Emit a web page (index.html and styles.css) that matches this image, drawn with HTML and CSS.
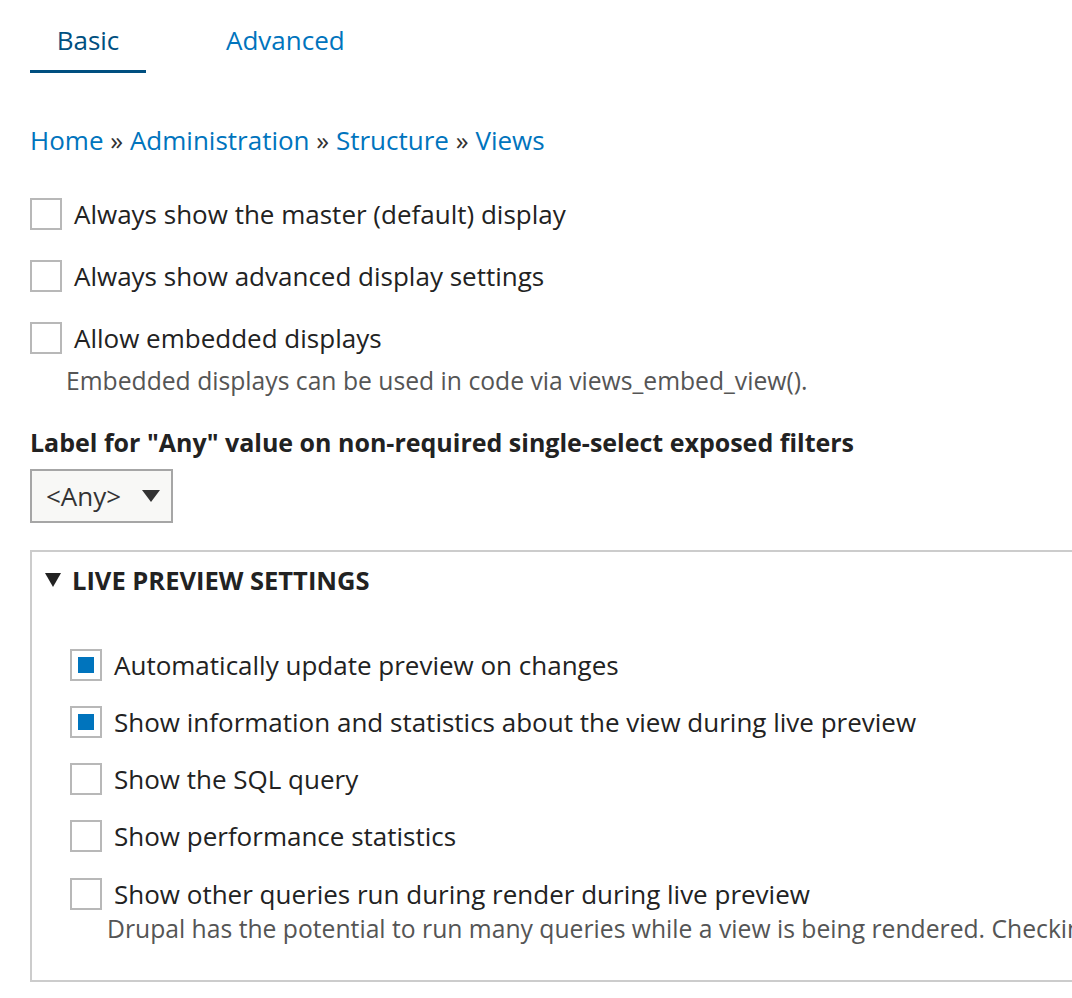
FILE: index.html
```html
<!DOCTYPE html>
<html>
<head>
<meta charset="utf-8">
<link rel="stylesheet" href="styles.css">
</head>
<body>
<div class="page">
  <nav class="tabs">
    <a class="tab active">Basic</a>
    <a class="tab">Advanced</a>
  </nav>
  <div class="breadcrumb">
    <a>Home</a> <span class="sep">»</span> <a>Administration</a> <span class="sep">»</span> <a>Structure</a> <span class="sep">»</span> <a>Views</a>
  </div>
  <div class="options">
    <div class="item"><span class="cb"></span><span class="lbl">Always show the master (default) display</span></div>
    <div class="item"><span class="cb"></span><span class="lbl">Always show advanced display settings</span></div>
    <div class="item"><span class="cb"></span><span class="lbl">Allow embedded displays</span></div>
    <div class="desc">Embedded displays can be used in code via views_embed_view().</div>
  </div>
  <div class="field">
    <div class="field-label">Label for "Any" value on non-required single-select exposed filters</div>
    <div class="select"><span>&lt;Any&gt;</span><span class="arrow"></span></div>
  </div>
  <fieldset class="fs">
    <div class="legend"><span class="tri"></span>LIVE PREVIEW SETTINGS</div>
    <div class="fs-items">
      <div class="item2"><span class="cb checked"></span><span class="lbl">Automatically update preview on changes</span></div>
      <div class="item2"><span class="cb checked"></span><span class="lbl">Show information and statistics about the view during live preview</span></div>
      <div class="item2"><span class="cb"></span><span class="lbl">Show the SQL query</span></div>
      <div class="item2"><span class="cb"></span><span class="lbl">Show performance statistics</span></div>
      <div class="item2"><span class="cb"></span><span class="lbl">Show other queries run during render during live preview</span></div>
      <div class="desc2">Drupal has the potential to run many queries while a view is being rendered. Checking this option will display every query run during the rendering of a view.</div>
    </div>
  </fieldset>
</div>
</body>
</html>
```
FILE: styles.css
```css
html, body { margin: 0; padding: 0; background: #fff; }
body {
  font-family: "Open Sans", "Noto Sans", sans-serif;
  color: #333;
  overflow: hidden;
  width: 1072px;
  height: 998px;
}
.page { padding: 0 0 0 30px; overflow: hidden; }
.tabs {
  display: flex;
  height: 73px;
  align-items: flex-start;
}
.tab {
  font-size: 26px;
  color: #0074bd;
  line-height: 34px;
  padding-top: 23px;
  box-sizing: border-box;
  height: 73px;
}
.tab.active {
  color: #004f80;
  width: 116px;
  text-align: center;
  border-bottom: 3px solid #004f80;
  margin-right: 80px;
}
.breadcrumb {
  margin-top: 50px;
  font-size: 26px;
  line-height: 34px;
  color: #333;
  white-space: nowrap;
}
.breadcrumb a { color: #0074bd; }
.options { margin-top: 41px; }
.item {
  display: flex;
  align-items: center;
  height: 32px;
  margin-bottom: 30px;
}
.item:nth-child(3) { margin-bottom: 12px; }
.cb {
  width: 28px;
  height: 28px;
  border: 2px solid #b8b8b8;
  flex: none;
  box-sizing: content-box;
  display: flex;
  align-items: center;
  justify-content: center;
  background: #fff;
}
.cb.checked::after {
  content: "";
  width: 16px;
  height: 16px;
  background: #0074bd;
}
.lbl {
  font-size: 26px;
  margin-left: 12px;
  color: #222;
  white-space: nowrap;
}
.desc {
  font-size: 24.7px;
  color: #555;
  margin-left: 36px;
  line-height: 30px;
  white-space: nowrap;
}
.field { margin-top: 29px; }
.field-label {
  font-size: 25px;
  font-weight: bold;
  color: #222;
  line-height: 34px;
  white-space: nowrap;
}
.select {
  margin-top: 10px;
  display: flex;
  align-items: center;
  width: 143px;
  height: 54px;
  box-sizing: border-box;
  border: 2px solid #a6a6a6;
  background: #f8f8f6;
  font-size: 26px;
  color: #333;
  padding-left: 14px;
}
.arrow {
  margin-left: 21px;
  width: 0; height: 0;
  border-left: 9px solid transparent;
  border-right: 9px solid transparent;
  border-top: 12px solid #333;
}
.fs {
  margin: 27px 0 0 0;
  padding: 0;
  border: 2px solid #ccc;
  border-right: none;
  height: 432px;
  box-sizing: border-box;
  width: 1100px;
  min-width: 0;
}
.legend {
  font-size: 25.5px;
  font-weight: bold;
  color: #222;
  display: flex;
  align-items: center;
  padding: 11px 0 0 13px;
  line-height: 34px;
  white-space: nowrap;
}
.tri {
  width: 0; height: 0;
  border-left: 8.5px solid transparent;
  border-right: 8.5px solid transparent;
  border-top: 14px solid #222;
  margin-right: 11px;
}
.fs-items { padding: 52px 0 0 38px; }
.item2 {
  display: flex;
  align-items: center;
  height: 32px;
  margin-bottom: 25px;
}
.item2:nth-child(4) { margin-bottom: 26px; }
.item2:nth-child(5) { margin-bottom: 4px; }
.desc2 {
  font-size: 24.7px;
  color: #555;
  margin-left: 37px;
  line-height: 30px;
  white-space: nowrap;
}
```
